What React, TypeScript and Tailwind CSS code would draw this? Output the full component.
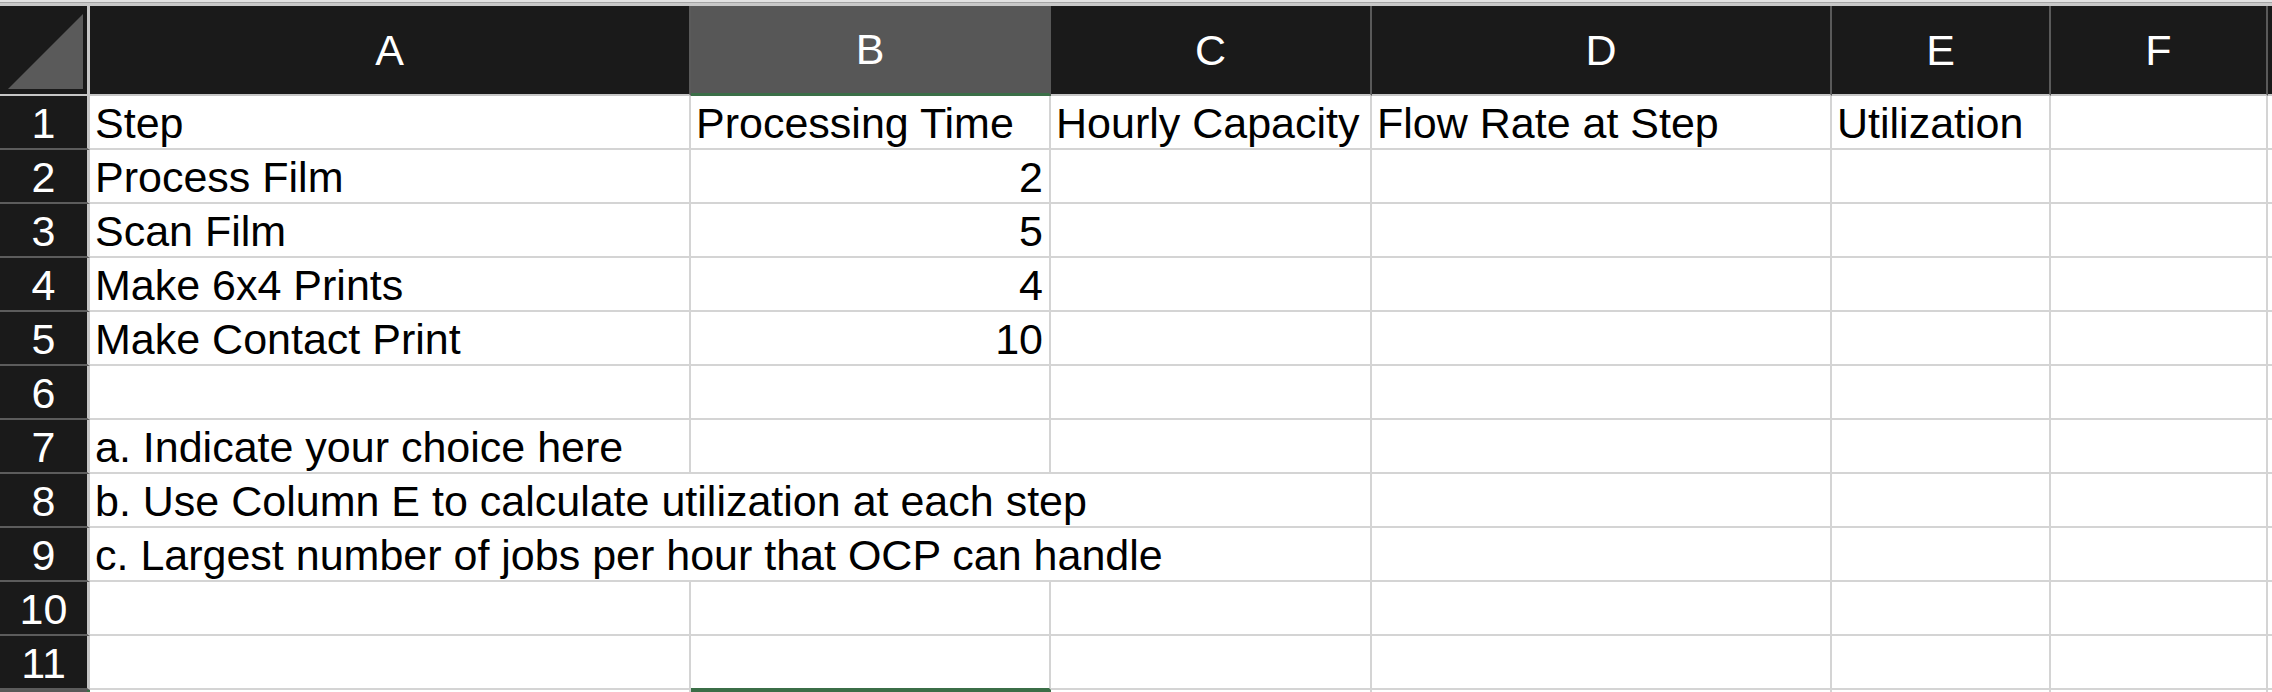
import React from "react";

const DARK = "bg-[#1a1a1a]";

function HeaderCell({ label, active, last }: { label: string; active?: boolean; last?: boolean }) {
  return (
    <div
      className={`flex items-center justify-center text-white ${active ? "bg-[#575757] border-r-2 border-r-[#575757] border-b-[3px] border-b-[#3b6e47]" : `${DARK} ${last ? "" : "border-r-2 border-r-[#5a5a5a]"} border-b-2 border-b-[#c6c6c6]`}`}
    >
      {label}
    </div>
  );
}

function RowHead({ n }: { n: number }) {
  return (
    <div className={`${DARK} flex items-center justify-center pt-[2px] text-white border-r-[3px] border-r-[#c6c6c6] border-b-2 border-b-[#5c5c5c]`}>
      {n}
    </div>
  );
}

function Cell({ children, right, span3, last }: { children?: React.ReactNode; right?: boolean; span3?: boolean; last?: boolean }) {
  return (
    <div
      className={`flex items-center pt-[2px] whitespace-nowrap ${last ? "" : "border-r-2 border-r-[#d4d4d4]"} border-b-2 border-b-[#d4d4d4] ${right ? "justify-end pr-[6px]" : "pl-[5px]"} ${span3 ? "col-span-3" : ""}`}
    >
      {children}
    </div>
  );
}

const data: string[][] = [
  ["Step", "Processing Time", "Hourly Capacity", "Flow Rate at Step", "Utilization"],
  ["Process Film", "2"],
  ["Scan Film", "5"],
  ["Make 6x4 Prints", "4"],
  ["Make Contact Print", "10"],
  [],
  ["a. Indicate your choice here"],
];

export default function App() {
  return (
    <div className="w-[2272px] h-[692px] overflow-hidden bg-white [font-family:'Liberation_Sans',sans-serif] text-[43px] leading-none text-black">
      <div className="h-[6px] flex flex-col">
        <div className="h-[2px] bg-[#e2e2e2]" />
        <div className="h-[1px] bg-[#a4a4a4]" />
        <div className="h-[3px] bg-[#c8c8c8]" />
      </div>
      <div className="grid grid-cols-[90px_601px_360px_321px_460px_219px_217px_4px] grid-rows-[90px_repeat(11,54px)_2px]">
        {/* header row */}
        <div className={`${DARK} border-r-[3px] border-r-[#c6c6c6] border-b-2 border-b-[#c6c6c6] flex`}>
          <svg width="87" height="88" viewBox="0 0 87 88">
            <polygon points="8,83 83,8 83,83" fill="#5a5a5a" />
          </svg>
        </div>
        <HeaderCell label="A" />
        <HeaderCell label="B" active />
        <HeaderCell label="C" />
        <HeaderCell label="D" />
        <HeaderCell label="E" />
        <HeaderCell label="F" />
        <HeaderCell label="" last />

        {/* rows 1-7 */}
        {data.map((r, i) => (
          <React.Fragment key={i}>
            <RowHead n={i + 1} />
            <Cell>{r[0]}</Cell>
            <Cell right={i > 0}>{r[1]}</Cell>
            <Cell>{r[2]}</Cell>
            <Cell>{r[3]}</Cell>
            <Cell>{r[4]}</Cell>
            <Cell />
            <Cell last />
          </React.Fragment>
        ))}

        {/* row 8 */}
        <RowHead n={8} />
        <Cell span3>b. Use Column E to calculate utilization at each step</Cell>
        <Cell />
        <Cell />
        <Cell />
        <Cell last />

        {/* row 9 */}
        <RowHead n={9} />
        <Cell span3>c. Largest number of jobs per hour that OCP can handle</Cell>
        <Cell />
        <Cell />
        <Cell />
        <Cell last />

        {/* row 10 */}
        <RowHead n={10} />
        <Cell />
        <Cell />
        <Cell />
        <Cell />
        <Cell />
        <Cell />
        <Cell last />

        {/* row 11 */}
        <RowHead n={11} />
        <Cell />
        <div className="border-r-2 border-r-[#d4d4d4] border-b-2 border-b-[#3b6e47]" />
        <Cell />
        <Cell />
        <Cell />
        <Cell />
        <Cell last />

        {/* row 12 (partial) */}
        <div className="bg-[#575757] border-r-[3px] border-r-[#3b6e47]" />
        <div className="border-r-2 border-r-[#d4d4d4]" />
        <div className="bg-[#3b6e47]" />
        <div className="border-r-2 border-r-[#d4d4d4]" />
        <div className="border-r-2 border-r-[#d4d4d4]" />
        <div className="border-r-2 border-r-[#d4d4d4]" />
        <div className="border-r-2 border-r-[#d4d4d4]" />
        <div />
      </div>
    </div>
  );
}
